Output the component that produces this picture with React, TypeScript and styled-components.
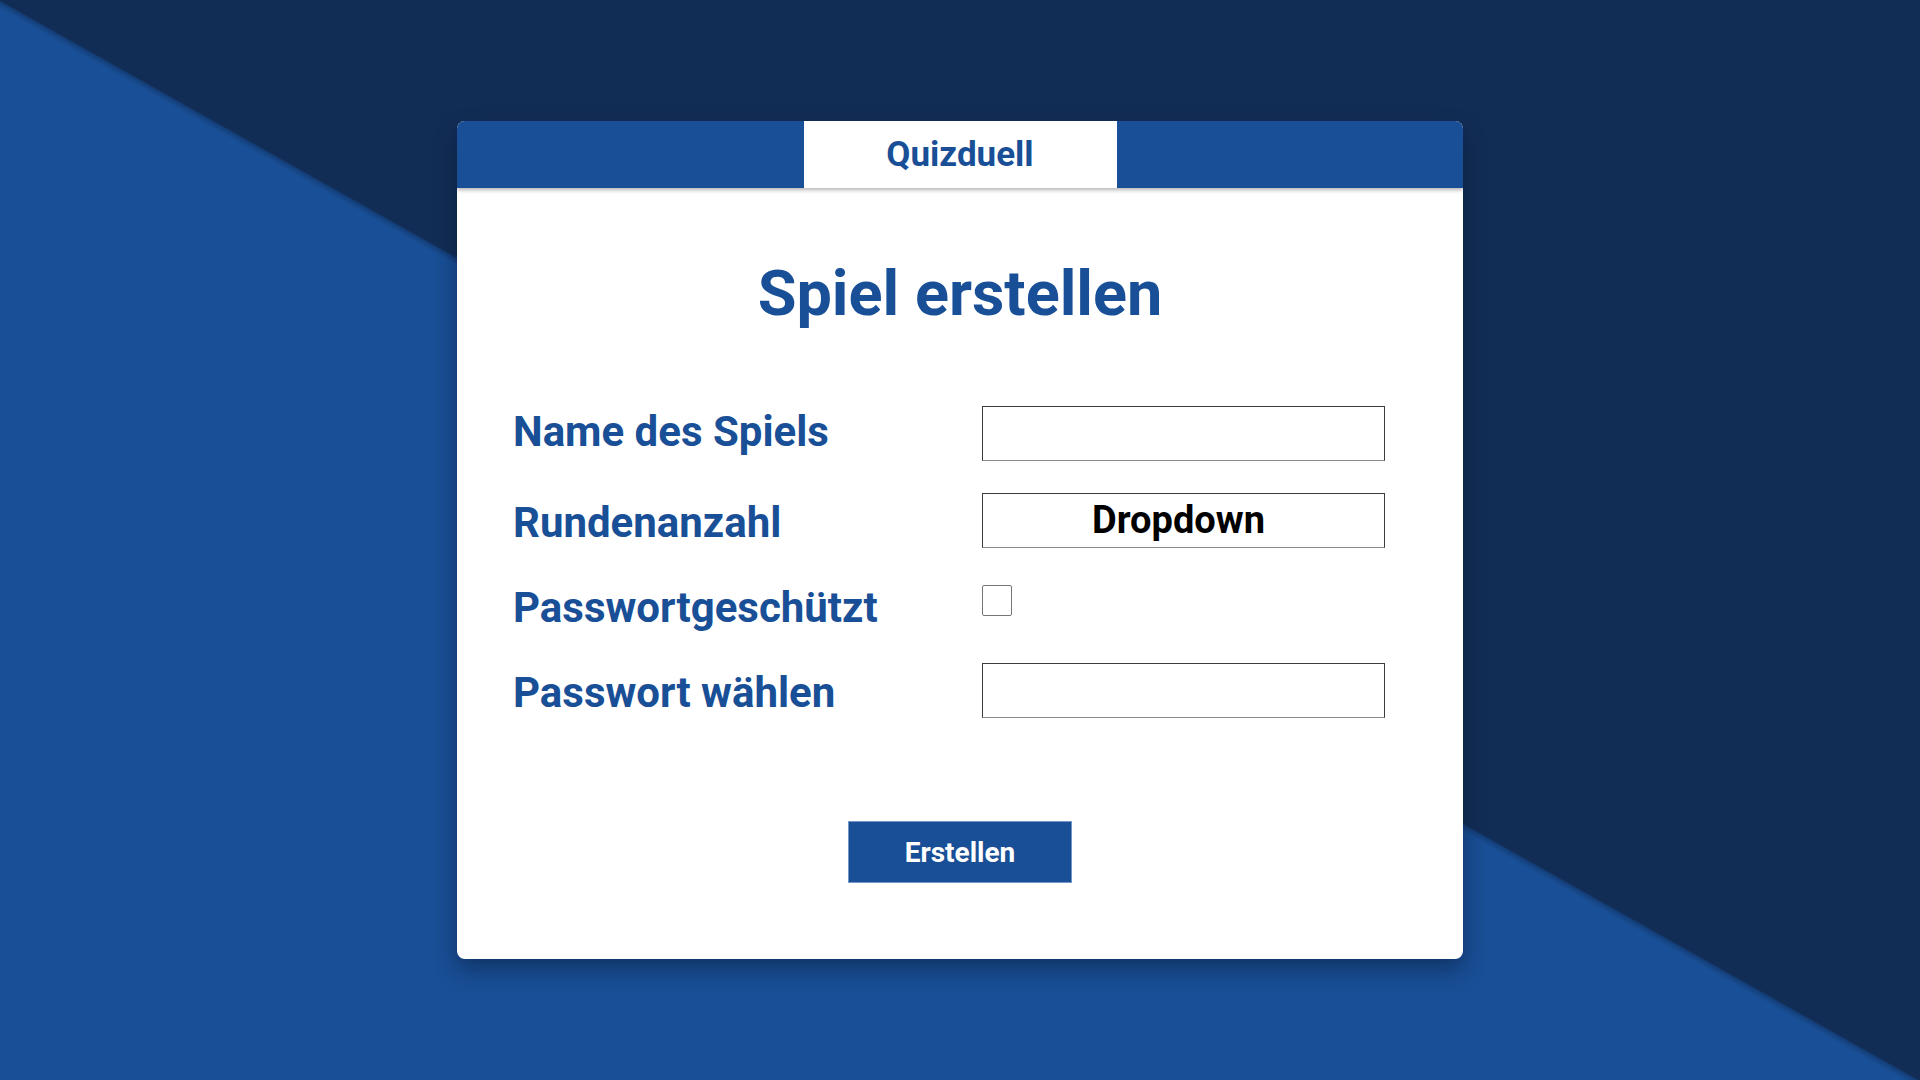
import React from 'react';
import styled, { createGlobalStyle } from 'styled-components';

const blue = '#194f96';
const navy = '#122d55';

const GlobalStyle = createGlobalStyle`
  html, body {
    margin: 0;
    padding: 0;
  }
  body {
    font-family: Roboto, "Liberation Sans", Arial, sans-serif;
  }
  * {
    box-sizing: border-box;
  }
`;

const Page = styled.div`
  min-height: 100vh;
  display: flex;
  align-items: center;
  justify-content: center;
  background: linear-gradient(
    to top right,
    ${blue} 0%,
    ${blue} 49.6%,
    #143f7a 49.9%,
    ${navy} 50%,
    ${navy} 100%
  );
`;

const Card = styled.div`
  width: 1006px;
  background: #fff;
  border-radius: 8px;
  box-shadow: 0 10px 22px rgba(6, 18, 40, 0.45);
  display: flex;
  flex-direction: column;
  overflow: hidden;
`;

const Header = styled.div`
  position: relative;
  z-index: 1;
  height: 67px;
  background: ${blue};
  display: flex;
  justify-content: center;
  box-shadow: 0 2px 4px rgba(0, 0, 0, 0.3);
`;

const Tab = styled.div`
  width: 313px;
  height: 100%;
  background: #fff;
  color: ${blue};
  font-size: 35px;
  font-weight: 700;
  display: flex;
  align-items: center;
  justify-content: center;
`;

const Body = styled.div`
  display: flex;
  flex-direction: column;
  align-items: center;
  padding: 67px 0 76px;
`;

const Title = styled.h1`
  margin: 0 0 56px;
  color: ${blue};
  font-size: 63px;
  font-weight: 700;
  line-height: 78px;
`;

// rows are not evenly spaced in the mockup
const Form = styled.div`
  align-self: stretch;
  display: grid;
  grid-template-columns: 469px 403px;
  grid-template-rows: 88px 86px 84px 86px;
  align-items: center;
  padding-left: 56px;
`;

const Label = styled.label<{ $shift?: number }>`
  color: ${blue};
  font-size: 42px;
  font-weight: 700;
  margin-top: ${(p) => p.$shift ?? 4}px;
`;

const Field = styled.div<{ $text?: boolean }>`
  height: 55px;
  border: 1px solid #3c3c3c;
  border-bottom-color: #8a8a8a;
  background: #fff;
  display: flex;
  align-items: center;
  justify-content: center;
  color: #000;
  font-size: 38px;
  font-weight: 700;
  padding-right: ${(p) => (p.$text ? '10px' : '0')};
`;

const Check = styled.div`
  width: 30px;
  height: 31px;
  border: 1px solid #767676;
  border-radius: 2px;
  background: #fff;
  margin-top: -10px;
`;

const Button = styled.button`
  margin-top: 88px;
  width: 224px;
  height: 62px;
  background: ${blue};
  border: 1px solid #7396c8;
  color: #fff;
  font-family: inherit;
  font-size: 28px;
  font-weight: 700;
  cursor: pointer;
`;

const App: React.FC = () => {
  return (
    <>
      <GlobalStyle />
      <Page>
        <Card>
          <Header>
            <Tab>Quizduell</Tab>
          </Header>
          <Body>
            <Title>Spiel erstellen</Title>
            <Form>
              <Label $shift={-4}>Name des Spiels</Label>
              <Field />
              <Label>Rundenanzahl</Label>
              <Field $text>Dropdown</Field>
              <Label>Passwortgeschützt</Label>
              <Check />
              <Label>Passwort wählen</Label>
              <Field />
            </Form>
            <Button>Erstellen</Button>
          </Body>
        </Card>
      </Page>
    </>
  );
};

export default App;
